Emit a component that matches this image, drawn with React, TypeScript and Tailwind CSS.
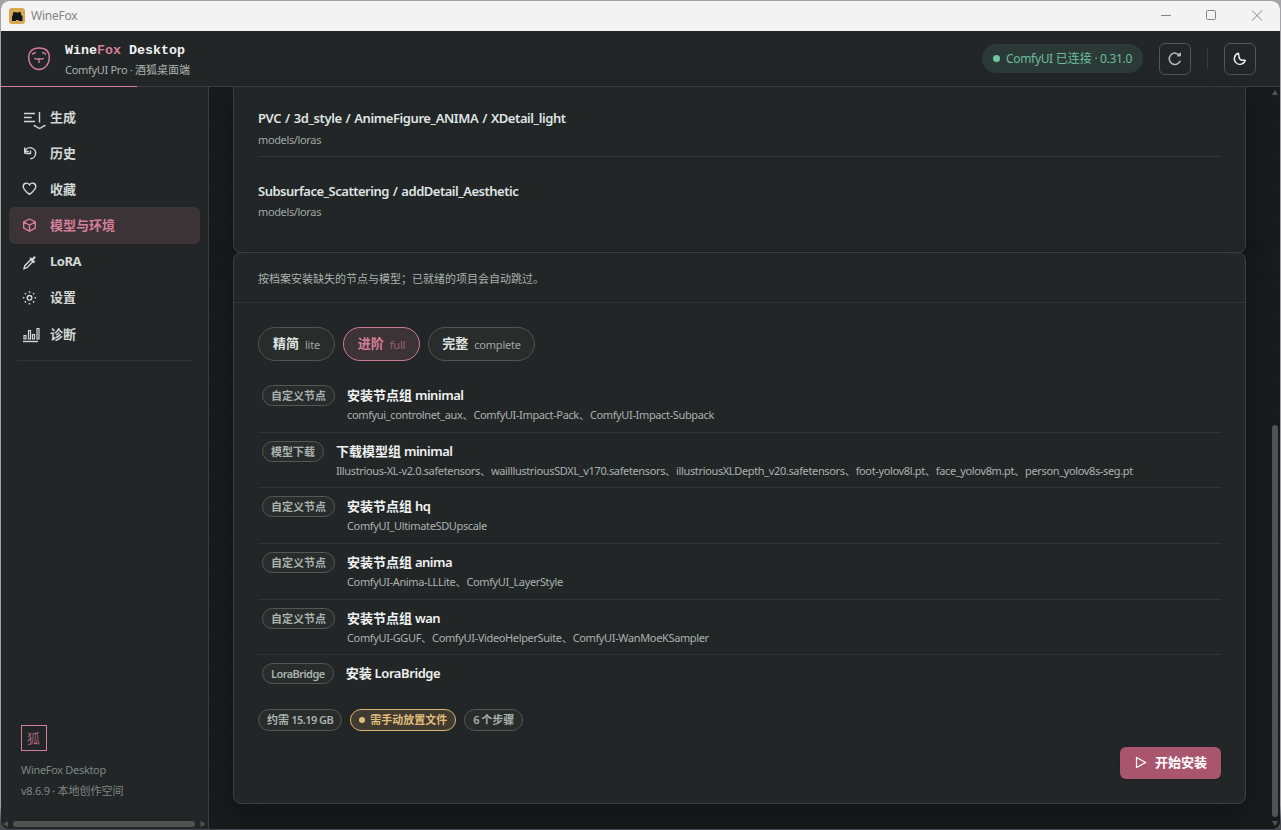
import { Fragment, type ReactNode } from "react";

/* Latin runs are tracked separately from Han runs so mixed labels keep an even rhythm. */
function T({ children, t }: { children: string; t: string }) {
  const parts = children.split(/([\u3000-\u9fff\uff00-\uffef]+)/).filter(Boolean);
  return (
    <>
      {parts.map((p, i) =>
        /^[\u3000-\u9fff\uff00-\uffef]/.test(p) ? (
          <Fragment key={i}>{p}</Fragment>
        ) : (
          <span key={i} className={t}>
            {p}
          </span>
        ),
      )}
    </>
  );
}

function Icon({ children }: { children: ReactNode }) {
  return (
    <svg width="16" height="16" viewBox="0 0 16 16" fill="none" stroke="currentColor" strokeWidth="1.4" className="shrink-0 overflow-visible">
      {children}
    </svg>
  );
}

const nav = [
  {
    label: "生成",
    icon: (
      <>
        <path d="M2 4.500H13M2 8.500H9.700M2 12.500H13M17.500 3V13.500" />
        <path d="M11.700 16.500Q13.500 16.800 14.500 17.800Q17.500 20.600 20.500 17.800Q21.500 16.800 23.500 16.500" />
      </>
    ),
  },
  {
    label: "历史",
    icon: (
      <>
        <path d="M2.700 2.500V6.500H6.700M3 6.200A5.500 5.500 0 1 1 8.300 13.700" />
        <path d="M2 7.800L5.500 8.500M8.500 5.500V8.500H5.500" />
      </>
    ),
  },
  {
    label: "收藏",
    icon: <path d="M7.500 13.400C3.300 10.200 1.200 8.300 1.200 5.500C1.200 1.900 5.700 0.900 7.500 3.900C9.300 0.900 13.800 1.900 13.800 5.500C13.800 8.300 11.700 10.200 7.500 13.400Z" />,
  },
  {
    label: "模型与环境",
    icon: <path d="M7.500 2L13.300 5V11.100L7.500 14.200L1.700 11.100V5ZM1.700 5L7.500 8.200L13.300 5M7.500 8.200V14.200" />,
  },
  {
    label: "LoRA",
    icon: (
      <>
        <path d="M2 14.700L2.800 11.700L8.800 5.700L10.800 7.700L4.900 13.700Z" />
        <path d="M8 4L12.500 8.500M10 6.200L13 2.700" strokeWidth="2.200" />
      </>
    ),
  },
  {
    label: "设置",
    icon: (
      <>
        <circle cx="7.500" cy="7.800" r="2.300" />
        <path d="M7.500 1.200V2.700M7.500 12.900V14.400M0.900 7.800H2.400M12.600 7.800H14.100M2.900 3.200L3.900 4.200M11.100 11.400L12.100 12.400M2.900 12.400L3.900 11.400M11.100 4.200L12.100 3.200" strokeWidth="1.600" />
      </>
    ),
  },
  {
    label: "诊断",
    icon: (
      <>
        <path d="M2 9.500H4V13H2ZM6.500 4.500H8.500V13H6.500ZM10.500 8.500H12.500V13H10.500ZM15 2.500H17V13H15Z" strokeWidth="1.200" />
        <path d="M1 15.500H16" />
      </>
    ),
  },
];

const steps = [
  { tag: "自定义节点", title: "安装节点组 minimal", sub: "comfyui_controlnet_aux、ComfyUI-Impact-Pack、ComfyUI-Impact-Subpack", h: "h-[56px]" },
  { tag: "模型下载", title: "下载模型组 minimal", sub: "Illustrious-XL-v2.0.safetensors、wailllustriousSDXL_v170.safetensors、illustriousXLDepth_v20.safetensors、foot-yolov8l.pt、face_yolov8m.pt、person_yolov8s-seg.pt", h: "h-[55px]" },
  { tag: "自定义节点", title: "安装节点组 hq", sub: "ComfyUI_UltimateSDUpscale", h: "h-[56px]" },
  { tag: "自定义节点", title: "安装节点组 anima", sub: "ComfyUI-Anima-LLLite、ComfyUI_LayerStyle", h: "h-[56px]" },
  { tag: "自定义节点", title: "安装节点组 wan", sub: "ComfyUI-GGUF、ComfyUI-VideoHelperSuite、ComfyUI-WanMoeKSampler", h: "h-[55px]" },
];

function Tag({ children, h = "h-[21px]" }: { children: string; h?: string }) {
  return (
    <span className={`flex ${h} shrink-0 items-center rounded-full border border-[#535856] bg-[#282c2b] px-2 pt-px text-[11px] font-semibold text-[#a9b3af]`}>
      <span>
        <T t="tracking-[-0.55px] whitespace-pre">{children}</T>
      </span>
    </span>
  );
}

function Tier({ name, code, active, w }: { name: string; code: string; active?: boolean; w: string }) {
  return (
    <button
      className={`flex h-[34px] ${w} items-center justify-center gap-[6px] rounded-full border ${
        active ? "border-[#cd7b93] bg-[#3c3337] text-[#d47f99]" : "border-[#505553] bg-[#282c2b] text-[#dfe4e2]"
      }`}
    >
      <span className="text-[13px] font-bold">{name}</span>
      <span className={`pt-[2px] text-[11px] tracking-[-0.2px] ${active ? "text-[#995f71]" : "text-[#a0a6a4]"}`}>{code}</span>
    </button>
  );
}

export default function App() {
  return (
    <div className="h-[830px] w-[1281px] overflow-hidden bg-[linear-gradient(to_bottom,#a3a3a5_97%,#454a50_99%)] px-px pt-px font-['Noto_Sans','Noto_Sans_CJK_SC',sans-serif] text-[#dfe4e2]">
      <div className="flex h-[828px] w-[1279px] flex-col overflow-hidden rounded-[8px] bg-[#222627]">
        <div className="flex h-[30px] shrink-0 items-center bg-[#f3f3f3] pl-2 text-[#858585]">
          <svg width="16" height="16" viewBox="0 0 16 16">
            <rect width="16" height="16" rx="3" fill="#d7a751" />
            <path d="M3 13V8.500L4 6.500V4.500L5.500 4L7 4.500H9L10.500 4L12 4.500V6.500L13.500 8.500V13H9.700V12H7V13Z" fill="#11161c" />
          </svg>
          <span className="ml-[6px] text-[12px] tracking-[-0.250px]">WineFox</span>
          <svg className="ml-auto mr-[17px]" width="104" height="12" viewBox="0 0 104 12" fill="none" stroke="#858585">
            <path d="M2 5.500H12" />
            <rect x="47.500" y="0.500" width="9" height="9" rx="1" />
            <path d="M93 0.500L103 10.500M103 0.500L93 10.500" />
          </svg>
        </div>

        <header className="flex h-[56px] shrink-0 flex-col">
          <div className="flex h-[55px] items-center pl-[26px] pr-6">
            <svg width="24" height="24" viewBox="0 0 24 24" fill="none" stroke="#d47f99" strokeWidth="1.400">
              <path d="M12 1C18.500 1 22.300 4.500 22.300 10.500C22.300 17.500 17.500 22.500 12 22.500C6.500 22.500 1.700 17.500 1.700 10.500C1.700 4.500 5.500 1 12 1Z" />
              <path d="M5 7.500Q6.500 5.700 9 5.500M19 7.500Q17.500 5.700 15 5.500M7.300 11.200Q9.500 12.800 12 11.500Q14.500 12.800 16.700 11.200M12 12V16" />
            </svg>
            <div className="ml-[14px] pt-px">
              <div className="h-[20px] whitespace-pre font-['Liberation_Mono',monospace] text-[13.33px] font-bold leading-[22px] text-[#f0f2f1]">
                Wine<span className="text-[#d47f99]">Fox</span> Desktop
              </div>
              <div className="h-[19px] text-[11px] leading-[19px] text-[#a9b3af]">
                <T t="tracking-[-0.3px] whitespace-pre">ComfyUI Pro · 酒狐桌面端</T>
              </div>
            </div>
            <div className="ml-auto flex h-[29px] w-[161px] items-center justify-center rounded-full bg-[#2c3a37] text-[12px] text-[#6dbd9c]">
              <span className="mr-[6px] size-[7px] rounded-full bg-[#6dc7a0]" />
              <span><T t="tracking-[-0.34px] whitespace-pre">ComfyUI 已连接 · 0.31.0</T></span>
            </div>
            <button className="ml-4 grid size-8 place-items-center rounded-[6px] border border-[#505553]">
              <svg width="16" height="16" viewBox="0 0 16 16" fill="none" stroke="#b5bcb9" strokeWidth="1.5">
                <path d="M12.800 4.800A5.700 5.700 0 1 0 13.300 9.800" />
                <path d="M10.200 5H13.500V1.800Z" fill="#b5bcb9" strokeWidth="0.800" />
              </svg>
            </button>
            <span className="mx-4 h-5 w-px bg-[#3a3f3e]" />
            <button className="grid size-8 place-items-center rounded-[6px] border border-[#505553]">
              <svg width="16" height="16" viewBox="0 0 16 16" fill="none" stroke="#eef1f0" strokeWidth="1.4">
                <path d="M6.500 2.300A5.600 5.600 0 1 0 13.300 9.300L10.500 9.300A4 4 0 0 1 7 5.800Z" strokeLinejoin="round" />
              </svg>
            </button>
          </div>
          <div className="h-px bg-[#3b403f]">
            <div className="h-px w-[136px] bg-[#d47f99]" />
          </div>
        </header>

        <div className="flex min-h-0 flex-1">
          <aside className="flex w-[208px] shrink-0 flex-col border-r border-[#3b403f]">
            <nav className="px-2 pt-3">
              {nav.map((n, i) => (
                <div
                  key={n.label}
                  className={`flex h-[36.140px] items-center rounded-[6px] pl-[13px] text-[13px] font-bold ${i === 3 ? "bg-[#3c3337] text-[#d47f99]" : "text-[#d3d8d6]"}`}
                >
                  <Icon>{n.icon}</Icon>
                  <span className="ml-3 pt-px"><T t="tracking-[-0.5px]">{n.label}</T></span>
                </div>
              ))}
            </nav>
            <div className="ml-4 mt-[8px] h-px w-[175px] bg-[#313635]" />
            <div className="mt-auto pl-5 text-[11px] leading-[21px] text-[#7e8784]">
              <div className="mb-[8px] grid size-[26px] place-items-center border border-[#d47f99] pb-[2px] pr-px font-['Noto_Sans_CJK_SC',sans-serif] text-[13px] font-light leading-none text-[#d47f99]">狐</div>
              <div className="tracking-[-0.320px]">WineFox Desktop</div>
              <div><T t="tracking-[-0.28px] whitespace-pre">v8.6.9 · 本地创作空间</T></div>
            </div>
            <div className="mt-[18px] flex h-[10px] items-center">
              <svg width="12" height="8" viewBox="0 0 12 8"><path d="M7 1V7L2 4Z" fill="#4f5352" /></svg>
              <div className="h-[6px] w-[182px] rounded-full bg-[#4f5352]" />
              <svg width="12" height="8" viewBox="0 0 12 8"><path d="M5.500 1V7L10.500 4Z" fill="#4f5352" /></svg>
            </div>
          </aside>

          <main className="flex min-w-0 flex-1 bg-[#171b1c] bg-[linear-gradient(to_right,#191d1e_1px,transparent_1px),linear-gradient(to_bottom,#191d1e_1px,transparent_1px)] bg-[size:32px_32px] bg-[position:16px_8px] pl-6">
            <div className="flex w-[1013px] shrink-0 flex-col">
              <section className="h-[166px] rounded-b-[8px] border border-t-0 border-[#3b403f] bg-[#222627] px-6 shadow-[0_10px_28px_rgba(0,0,0,0.3)]">
                <div className="h-[70px] border-b border-[#313635] pt-[21px]">
                  <div className="text-[13px] font-semibold leading-[20px] tracking-[-0.420px] [word-spacing:1px]">PVC / 3d_style / AnimeFigure_ANIMA / XDetail_light</div>
                  <div className="mt-[3px] text-[11px] leading-[18px] tracking-[-0.360px] text-[#a0a6a4]">models/loras</div>
                </div>
                <div className="pt-[24px]">
                  <div className="text-[13px] font-semibold leading-[20px] tracking-[-0.490px] [word-spacing:1px]">Subsurface_Scattering / addDetail_Aesthetic</div>
                  <div className="mt-[2px] text-[11px] leading-[18px] tracking-[-0.360px] text-[#a0a6a4]">models/loras</div>
                </div>
              </section>

              <section className="-mt-px h-[552px] rounded-[8px] border border-[#3b403f] bg-[#222627] shadow-[0_10px_28px_rgba(0,0,0,0.3)]">
                <div className="flex h-[50px] items-center border-b border-[#313635] px-6 pt-[3px] text-[11px] text-[#a9b3af]">按档案安装缺失的节点与模型；已就绪的项目会自动跳过。</div>
                <div className="px-6">
                  <div className="mt-6 flex gap-2">
                    <Tier name="精简" code="lite" w="w-[77px]" />
                    <Tier name="进阶" code="full" w="w-[77px]" active />
                    <Tier name="完整" code="complete" w="w-[107px]" />
                  </div>
                  <div className="mt-[16px]">
                    {steps.map((s) => (
                      <div key={s.title} className={`flex ${s.h} items-start gap-3 border-b border-[#313635] pl-1 pt-[8px]`}>
                        <Tag>{s.tag}</Tag>
                        <div className="whitespace-nowrap">
                          <div className="h-[20px] text-[13px] font-bold leading-[20px] text-[#f0f2f1]">
                            <T t="font-semibold tracking-[-0.48px] whitespace-pre">{s.title}</T>
                          </div>
                          <div className="h-[20px] text-[11px] leading-[20px] text-[#a9b3af]">
                            <T t="tracking-[-0.36px] whitespace-pre">{s.sub}</T>
                          </div>
                        </div>
                      </div>
                    ))}
                    <div className="flex h-[54px] items-start gap-3 pl-1 pt-[8px]">
                      <Tag>LoraBridge</Tag>
                      <div className="text-[13px] font-bold leading-[20px] text-[#f0f2f1]">
                        <T t="font-semibold tracking-[-0.42px] whitespace-pre">安装 LoraBridge</T>
                      </div>
                    </div>
                  </div>
                  <div className="flex gap-2">
                    <Tag h="h-[22px]">约需 15.19 GB</Tag>
                    <span className="flex h-[22px] items-center rounded-full border border-[#d9b571] bg-[#403a30] px-2 pt-px text-[11px] font-semibold text-[#e0bd7c]">
                      <i className="mb-px mr-[5px] size-[6px] rounded-full bg-[#e0bd7c]" />需手动放置文件
                    </span>
                    <Tag h="h-[22px]">6 个步骤</Tag>
                  </div>
                  <button className="ml-auto mt-4 flex h-8 w-[101px] items-center justify-center gap-[7px] rounded-[6px] bg-[#a9556d] text-[13px] font-bold text-white shadow-sm">
                    <svg width="14" height="14" viewBox="0 0 14 14" fill="none" stroke="#fff" strokeWidth="1.200"><path d="M2.500 1.500V11.500L11.500 6.500Z" /></svg>
                    开始安装
                  </button>
                </div>
              </section>
            </div>
            <div className="ml-auto mr-px flex w-[8px] flex-col items-center pt-[2px]">
              <svg width="8" height="6" viewBox="0 0 8 6"><path d="M1 6H7L4 1Z" fill="#505452" /></svg>
              <div className="mt-[330px] h-[392px] w-[6px] rounded-full bg-[#4f5352]" />
              <svg className="mt-[4px]" width="8" height="6" viewBox="0 0 8 6"><path d="M1 0H7L4 5Z" fill="#505452" /></svg>
            </div>
          </main>
        </div>
      </div>
    </div>
  );
}
